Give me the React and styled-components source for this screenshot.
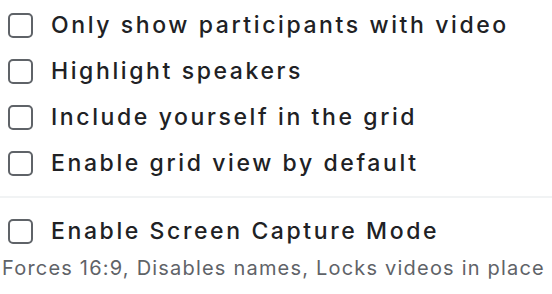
import styled, { createGlobalStyle } from 'styled-components';

const GlobalStyle = createGlobalStyle`
  body {
    margin: 0;
    background: #ffffff;
    font-family: Inter, "Open Sans", sans-serif;
  }
`;

const Panel = styled.div`
  display: flex;
  flex-direction: column;
  padding-top: 2px;
`;

const Row = styled.label`
  display: flex;
  align-items: center;
  height: 46px;
  padding-left: 8px;
  gap: 18px;
  cursor: pointer;
`;

const Box = styled.input.attrs({ type: 'checkbox' })`
  appearance: none;
  margin: 0;
  width: 25px;
  height: 25px;
  box-sizing: border-box;
  border: 2px solid #5f6368;
  border-radius: 5px;
  flex-shrink: 0;
`;

const Label = styled.span`
  font-size: 23px;
  font-weight: 500;
  color: #202124;
  letter-spacing: 2.6px;
  white-space: nowrap;
`;

const Divider = styled.hr`
  border: none;
  height: 2px;
  background: #f1f3f4;
  margin: 10px 0 10px;
`;

const Caption = styled.div`
  font-size: 20px;
  color: #5f6368;
  padding-left: 2px;
  line-height: 24px;
  margin-top: 2px;
  letter-spacing: 1.2px;
  white-space: nowrap;
`;

const options = [
  'Only show participants with video',
  'Highlight speakers',
  'Include yourself in the grid',
  'Enable grid view by default',
];

export default function App() {
  return (
    <Panel>
      <GlobalStyle />
      {options.map(text => (
        <Row key={text}>
          <Box />
          <Label>{text}</Label>
        </Row>
      ))}
      <Divider />
      <Row>
        <Box />
        <Label>Enable Screen Capture Mode</Label>
      </Row>
      <Caption>Forces 16:9, Disables names, Locks videos in place</Caption>
    </Panel>
  );
}
